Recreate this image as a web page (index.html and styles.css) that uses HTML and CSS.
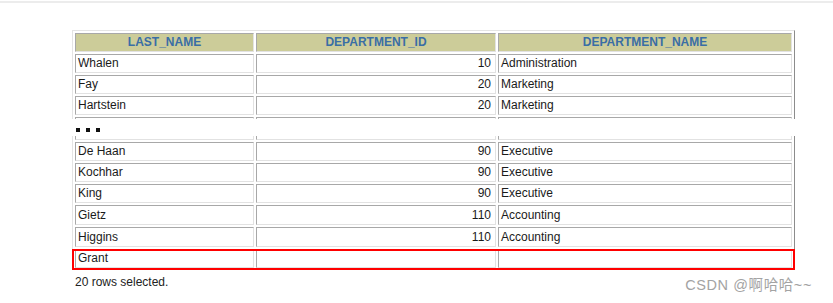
FILE: index.html
```html
<!DOCTYPE html>
<html>
<head>
<meta charset="utf-8">
<link rel="stylesheet" href="styles.css">
</head>
<body>
<div class="topline"></div>
<div class="page">
  <div class="clip clip-top">
    <table class="grid">
      <thead>
        <tr><th class="c1">LAST_NAME</th><th class="c2">DEPARTMENT_ID</th><th class="c3">DEPARTMENT_NAME</th></tr>
      </thead>
      <tbody>
        <tr><td>Whalen</td><td class="num">10</td><td>Administration</td></tr>
        <tr><td>Fay</td><td class="num">20</td><td>Marketing</td></tr>
        <tr><td>Hartstein</td><td class="num">20</td><td>Marketing</td></tr>
        <tr><td></td><td class="num"></td><td></td></tr>
      </tbody>
    </table>
  </div>
  <div class="dots"><span></span><span></span><span></span></div>
  <div class="clip clip-bottom">
    <table class="grid shifted">
      <tbody>
        <tr><td class="c1"></td><td class="c2 num"></td><td class="c3"></td></tr>
        <tr><td>De Haan</td><td class="num">90</td><td>Executive</td></tr>
        <tr><td>Kochhar</td><td class="num">90</td><td>Executive</td></tr>
        <tr><td>King</td><td class="num">90</td><td>Executive</td></tr>
        <tr class="tall"><td>Gietz</td><td class="num">110</td><td>Accounting</td></tr>
        <tr class="tall"><td>Higgins</td><td class="num">110</td><td>Accounting</td></tr>
        <tr><td>Grant</td><td class="num"></td><td></td></tr>
      </tbody>
    </table>
    <div class="highlight"></div>
  </div>
  <div class="footer">
    <span class="count">20 rows selected.</span>
    <span class="watermark">CSDN @啊哈哈~~</span>
  </div>
</div>
</body>
</html>
```

FILE: styles.css
```css
html, body {
  margin: 0;
  padding: 0;
  background: #ffffff;
}
body {
  width: 833px;
  height: 303px;
  overflow: hidden;
  font-family: "Liberation Sans", Arial, sans-serif;
  font-size: 12px;
  color: #1a1a1a;
}
.topline {
  margin-top: 1px;
  height: 2px;
  background: #ececec;
}
.page {
  padding-left: 72px;
  padding-top: 27px;
}
.clip {
  overflow: hidden;
  width: 724px;
}
.clip-top {
  height: 89px;
}
.clip-bottom {
  position: relative;
  height: 134px;
}
.grid {
  width: 723px;
  table-layout: fixed;
  border-collapse: separate;
  border-spacing: 2px;
  border: 1px solid;
  border-color: #e4e4e4 #8c8c8c #8c8c8c #e4e4e4;
  empty-cells: show;
}
.shifted {
  margin-top: -18px;
}
.grid th,
.grid td {
  box-sizing: border-box;
  height: 19px;
  padding: 0 2px;
  line-height: 17px;
  border: 1px solid;
  border-color: #a8a8a8 #e2e2e2 #e2e2e2 #a8a8a8;
  white-space: nowrap;
  overflow: hidden;
}
.grid tr.tall td {
  height: 20px;
  line-height: 18px;
}
.grid th {
  background: #cccc99;
  color: #3a6ea5;
  font-weight: bold;
  text-align: center;
}
.c1 { width: 179px; }
.c2 { width: 240px; }
.c3 { width: auto; }
.grid td.num {
  text-align: right;
  padding-right: 4px;
}
.dots {
  display: flex;
  gap: 6px;
  padding: 9px 0 0 4px;
  height: 8px;
}
.dots span {
  width: 4px;
  height: 4px;
  background: #111;
}
.highlight {
  position: absolute;
  left: 0;
  top: 113px;
  width: 723px;
  height: 21px;
  box-sizing: border-box;
  border: 2px solid #ff0000;
}
.footer {
  display: flex;
  justify-content: space-between;
  align-items: flex-start;
  width: 740px;
  padding-top: 5px;
}
.count {
  padding-left: 3px;
  line-height: 14px;
  color: #222;
}
.watermark {
  margin-top: 2px;
  font-size: 14.5px;
  line-height: 17px;
  letter-spacing: 0.6px;
  color: #a3a3a3;
  font-family: "Liberation Sans", "Noto Sans CJK SC", sans-serif;
}
```
